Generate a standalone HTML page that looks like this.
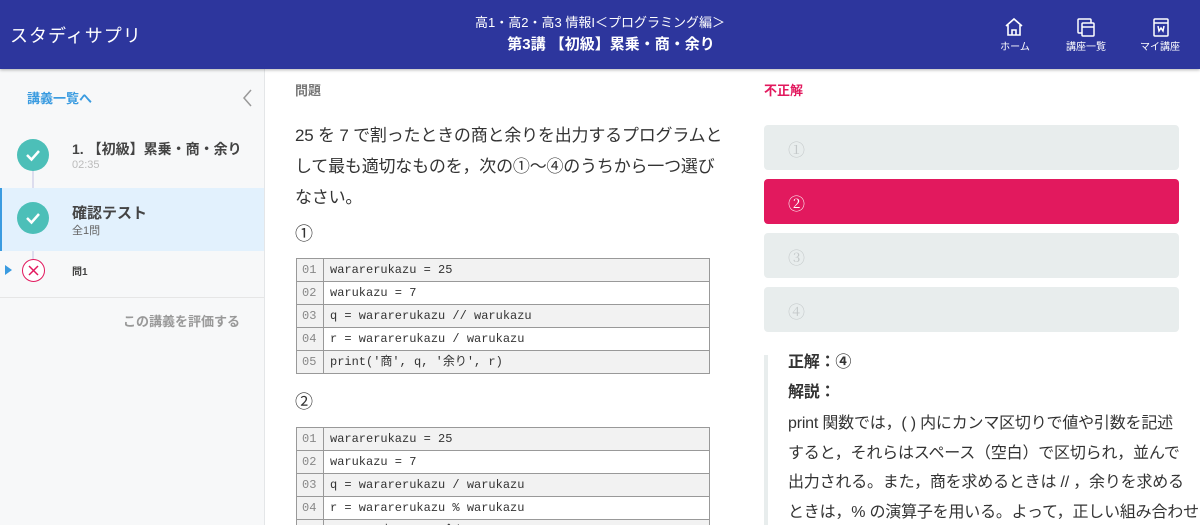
<!DOCTYPE html>
<html style="width:1200px;height:525px;overflow:hidden"><head><meta charset="utf-8"><style>
*{margin:0;padding:0;box-sizing:border-box}
body{width:1200px;height:525px;overflow:hidden;background:#fff;font-family:"Liberation Sans","Noto Sans CJK JP",sans-serif;position:relative;color:#333}
.abs{position:absolute}
#hd{left:0;top:0;width:1200px;height:69px;background:#2d369d;color:#fff;box-shadow:0 1px 3px rgba(0,0,0,.3);z-index:2}
#side{left:0;top:69px;width:265px;height:456px;background:#f7f8f9;border-right:1px solid #e4e6e8}
.circ{border-radius:50%;background:#4cbfb8;width:32px;height:32px}
.code{left:296px;width:414px;border-collapse:collapse;font-family:"Liberation Mono","Noto Sans CJK JP",monospace;font-size:12px;color:#333}
.code td{border:1px solid #999;height:23px;padding:0 6px;line-height:21px}
.code td:first-child{width:27px;color:#888;padding:0 5px;background:#f2f2f2}
.code tr:nth-child(odd) td{background:#f2f2f2}
.opt{left:764px;width:415px;height:45px;border-radius:4px;background:#e8eded;color:#c3c8c9;font-family:"Liberation Serif","Noto Serif CJK SC",serif;font-size:17px;padding:11px 0 0 24px}
.p{font-size:16px;color:#333;line-height:29.5px;white-space:nowrap;letter-spacing:-0.2px}
</style></head><body>
<div id="hd" class="abs">
<div class="abs" style="left:10px;top:22px;font-size:18px;letter-spacing:1px">スタディサプリ</div>
<div class="abs" style="left:0;width:1200px;top:12px;text-align:center;font-size:13px">高1・高2・高3 情報I＜プログラミング編＞</div>
<div class="abs" style="left:0;width:1222px;top:33px;text-align:center;font-size:15px;font-weight:bold">第3講 【初級】累乗・商・余り</div>
<svg class="abs" style="left:1003px;top:16px" width="22" height="22" viewBox="0 0 22 22" fill="none" stroke="#fff" stroke-width="1.6"><path d="M3 10 L11 3 L19 10 M5 9 V19 H17 V9 M9 19 V14 H13 V19"/></svg>
<svg class="abs" style="left:1075px;top:16px" width="22" height="22" viewBox="0 0 22 22" fill="none" stroke="#fff" stroke-width="1.5"><rect x="3" y="3" width="13" height="14" rx="1"/><rect x="7" y="7" width="12" height="13" rx="1" fill="#2d369d"/><path d="M7 11 H19"/></svg>
<svg class="abs" style="left:1150px;top:16px" width="22" height="22" viewBox="0 0 22 22" fill="none" stroke="#fff" stroke-width="1.5"><rect x="4" y="3" width="14" height="17" rx="1"/><path d="M4 7 H18 M8 10 L9 15 L11 12 L13 15 L14 10"/></svg>
<div class="abs" style="left:990px;width:50px;top:38px;text-align:center;font-size:10px">ホーム</div>
<div class="abs" style="left:1060px;width:52px;top:38px;text-align:center;font-size:10px">講座一覧</div>
<div class="abs" style="left:1135px;width:50px;top:38px;text-align:center;font-size:10px">マイ講座</div>
</div>
<div id="side" class="abs">
<div class="abs" style="left:27px;top:19px;font-size:13px;color:#3a9be0;font-weight:bold">講義一覧へ</div>
<svg class="abs" style="left:242px;top:20px" width="12" height="18"><path d="M9 1 L2 9 L9 17" stroke="#999" stroke-width="1.5" fill="none"/></svg>
<div class="abs" style="left:32px;top:100px;width:2px;height:100px;background:#dde"></div>
<div class="abs" style="left:0;top:119px;width:264px;height:63px;background:#e2f1fd;border-left:2px solid #3a9be0"></div>
<div class="abs circ" style="left:17px;top:70px"></div>
<svg class="abs" style="left:17px;top:70px" width="32" height="32"><path d="M10 16 L14.5 20.5 L22 12" stroke="#fff" stroke-width="2.5" fill="none"/></svg>
<div class="abs" style="left:72px;top:70px;font-size:14px;font-weight:bold;color:#444">1. 【初級】累乗・商・余り</div>
<div class="abs" style="left:72px;top:90px;font-size:11px;color:#bbb">02:35</div>
<div class="abs circ" style="left:17px;top:133px"></div>
<svg class="abs" style="left:17px;top:133px" width="32" height="32"><path d="M10 16 L14.5 20.5 L22 12" stroke="#fff" stroke-width="2.5" fill="none"/></svg>
<div class="abs" style="left:72px;top:133px;font-size:15px;font-weight:bold;color:#444">確認テスト</div>
<div class="abs" style="left:72px;top:153px;font-size:11px;color:#666">全1問</div>
<div class="abs" style="left:5px;top:196px;width:0;height:0;border-left:7px solid #3a9be0;border-top:5px solid transparent;border-bottom:5px solid transparent"></div>
<div class="abs" style="left:22px;top:190px;width:23px;height:23px;border-radius:50%;border:1px solid #e2195e;background:#fff"></div>
<svg class="abs" style="left:22px;top:190px" width="23" height="23"><path d="M7 7 L16 16 M16 7 L7 16" stroke="#e2195e" stroke-width="1.5"/></svg>
<div class="abs" style="left:72px;top:194px;font-size:10px;font-weight:bold;color:#444">問1</div>
<div class="abs" style="left:0;top:228px;width:264px;height:1px;background:#e6e6e6"></div>
<div class="abs" style="left:0;width:240px;top:242px;text-align:right;font-size:13px;font-weight:bold;color:#999">この講義を評価する</div>
</div>
<div class="abs" style="left:295px;top:80px;font-size:13px;color:#777;font-weight:bold">問題</div>
<div class="abs" style="left:295px;top:120px;font-size:17px;line-height:31px;color:#333;white-space:nowrap;letter-spacing:-0.2px">25 を 7 で割ったときの商と余りを出力するプログラムと<br>して最も適切なものを，次の①～④のうちから一つ選び<br>なさい。</div>
<div class="abs" style="left:295px;top:220px;font-size:18px">①</div>
<table class="abs code" style="top:258px">
<tr><td>01</td><td>wararerukazu = 25</td></tr>
<tr><td>02</td><td>warukazu = 7</td></tr>
<tr><td>03</td><td>q = wararerukazu // warukazu</td></tr>
<tr><td>04</td><td>r = wararerukazu / warukazu</td></tr>
<tr><td>05</td><td>print('商', q, '余り', r)</td></tr>
</table>
<div class="abs" style="left:295px;top:388px;font-size:18px">②</div>
<table class="abs code" style="top:427px">
<tr><td>01</td><td>wararerukazu = 25</td></tr>
<tr><td>02</td><td>warukazu = 7</td></tr>
<tr><td>03</td><td>q = wararerukazu / warukazu</td></tr>
<tr><td>04</td><td>r = wararerukazu % warukazu</td></tr>
<tr><td>05</td><td>print('商', q, '余り', r)</td></tr>
</table>
<div class="abs" style="left:764px;top:80px;font-size:13px;color:#e2195e;font-weight:bold">不正解</div>
<div class="abs opt" style="top:125px">①</div>
<div class="abs opt" style="top:179px;background:#e2195e;color:#fff">②</div>
<div class="abs opt" style="top:233px">③</div>
<div class="abs opt" style="top:287px">④</div>
<div class="abs" style="left:764px;top:355px;width:4px;height:170px;background:#e8eded"></div>
<div class="abs p" style="left:788px;top:348px">
<div style="font-weight:bold">正解：④</div>
<div style="margin-bottom:2px;font-weight:bold">解説：</div>
<div>print 関数では，( ) 内にカンマ区切りで値や引数を記述<br>すると，それらはスペース（空白）で区切られ，並んで<br>出力される。また，商を求めるときは // ，余りを求める<br>ときは，% の演算子を用いる。よって，正しい組み合わせ</div>
</div>
</body></html>
